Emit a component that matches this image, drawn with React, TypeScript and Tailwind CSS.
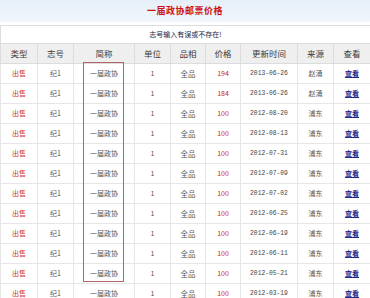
import React from 'react';

const rows = [
  { price: '194', date: '2013-06-26', src: '赵涌' },
  { price: '184', date: '2013-06-26', src: '赵涌' },
  { price: '100', date: '2012-08-20', src: '浦东' },
  { price: '100', date: '2012-08-13', src: '浦东' },
  { price: '100', date: '2012-07-31', src: '浦东' },
  { price: '100', date: '2012-07-09', src: '浦东' },
  { price: '100', date: '2012-07-02', src: '浦东' },
  { price: '100', date: '2012-06-25', src: '浦东' },
  { price: '100', date: '2012-06-19', src: '浦东' },
  { price: '100', date: '2012-06-11', src: '浦东' },
  { price: '100', date: '2012-05-21', src: '浦东' },
  { price: '100', date: '2012-03-19', src: '浦东' },
];

const headers = ['类型', '志号', '简称', '单位', '品相', '价格', '更新时间', '来源', '查看'];
const widths = [37, 36, 61, 36, 35, 35, 57, 36, 37];

const App = () => {
  return (
    <div
      className="relative w-[370px] h-[298px] overflow-hidden bg-white"
      style={{ fontFamily: '"Noto Sans CJK SC", "Noto Sans", sans-serif' }}
    >
      <div className="h-[22px] bg-gradient-to-b from-[#e6eff9] to-[#f1f6fc] flex items-center justify-center">
        <span className="text-[9px] font-bold text-[#cc1111] tracking-[0.5px]">一届政协邮票价格</span>
      </div>
      <div className="h-[3px]" />

      <table className="w-[370px] table-fixed border-collapse text-center">
        <colgroup>
          {widths.map((w, i) => (
            <col key={i} style={{ width: w }} />
          ))}
        </colgroup>
        <tbody>
          <tr className="h-[18px]">
            <td colSpan={9} className="border border-[#dddddd] text-[7px] text-[#222244] leading-none">
              志号输入有误或不存在!
            </td>
          </tr>
          <tr className="h-[20px] bg-[#efefef]">
            {headers.map((h) => (
              <td key={h} className="border border-[#dcdcdc] text-[8.5px] text-[#3a3a3a] leading-none">
                {h}
              </td>
            ))}
          </tr>
          {rows.map((r, i) => (
            <tr key={i} className="h-[20px] text-[7px] leading-none text-[#555555]">
              <td className="border border-[#e6e6e6] text-[#cc3333]">出售</td>
              <td className="border border-[#e6e6e6]">纪1</td>
              <td className="border border-[#e6e6e6]">一届政协</td>
              <td className="border border-[#e6e6e6]">1</td>
              <td className="border border-[#e6e6e6] text-[7.5px]">全品</td>
              <td className="border border-[#e6e6e6] text-[#cc2222]">{r.price}</td>
              <td className="border border-[#e6e6e6] text-[#444444]" style={{ fontFamily: '"Liberation Mono", monospace' }}>
                <span className="text-[6.3px]">{r.date}</span>
              </td>
              <td className="border border-[#e6e6e6]">{r.src}</td>
              <td className="border border-[#e6e6e6]">
                <a className="underline text-[#27278a] font-bold">查看</a>
              </td>
            </tr>
          ))}
        </tbody>
      </table>

      <div className="absolute left-[83px] top-[62px] w-[41px] h-[220px] border border-[#b06464]" />
    </div>
  );
};

export default App;
